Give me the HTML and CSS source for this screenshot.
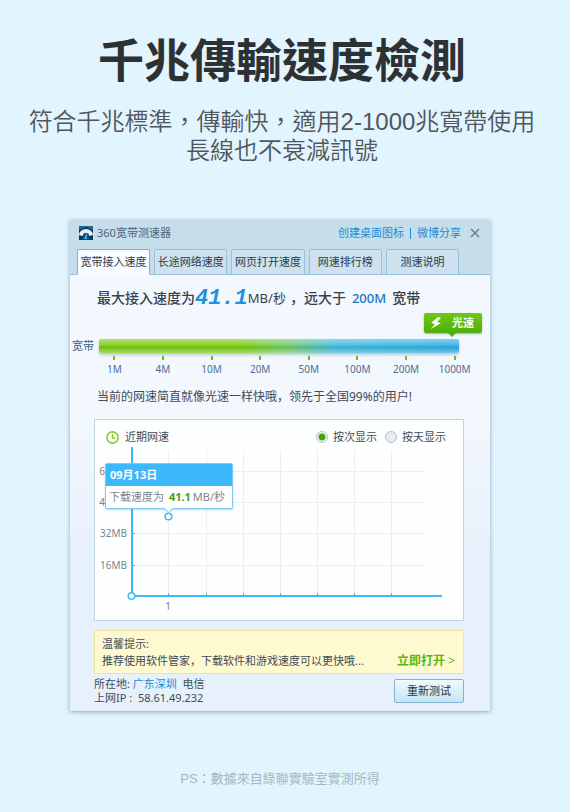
FILE: index.html
```html
<!DOCTYPE html>
<html lang="zh-Hant">
<head>
  <meta charset="UTF-8" />
  <meta name="viewport" content="width=device-width, initial-scale=1.0"/>
  <title>千兆傳輸速度檢測</title>
  <link rel="stylesheet" href="styles.css">
</head>
<body>
  <header class="intro">
    <h1>千兆傳輸速度檢測</h1>
    <p>符合千兆標準，傳輸快，適用2-1000兆寬帶使用<br>長線也不衰減訊號</p>
  </header>

  <main class="window" lang="zh-Hans">
    <div class="titlebar">
      <svg class="app-icon" width="14" height="14" viewBox="0 0 14 14">
        <rect width="14" height="14" fill="#0d3556"/>
        <path d="M0 0h14v4L7 1 0 4z" fill="#1d6796"/>
        <path d="M0 9a7 6 0 0 1 14 0l-4 1a3 3 0 0 0-6 0z" fill="#e9f2f7"/>
        <path d="M3 14l1-4a3 3 0 0 1 6 0l1 4z" fill="#0a4c80"/>
        <path d="M5 13l3-7v7z" fill="#35b4ef"/>
      </svg>
      <span class="app-name">360宽带测速器</span>
      <a href="#">创建桌面图标</a>
      <span class="divider"></span>
      <a href="#">微博分享</a>
      <button type="button" class="close" aria-label="关闭">
        <svg width="10" height="10" viewBox="0 0 10 10">
          <path d="M1 1l8 8M9 1l-8 8" stroke="#71818d" stroke-width="1.6"/>
        </svg>
      </button>
    </div>

    <nav class="tabs">
      <button type="button" class="active">宽带接入速度</button>
      <button type="button">长途网络速度</button>
      <button type="button">网页打开速度</button>
      <button type="button">网速排行榜</button>
      <button type="button">测速说明</button>
    </nav>

    <div class="content">
      <div class="result">
        <span>最大接入速度为</span>
        <span class="digits">41.1</span>
        <span class="unit">MB/秒</span>
        <span class="than">，远大于</span>
        <span class="plan">200M</span>
        <span>宽带</span>
      </div>

      <div class="badge">
        <svg width="12" height="12" viewBox="0 0 12 12">
          <path d="M8 0L1 6l4 1-4 5 10-6-4-1 4-4z" fill="#fff"/>
        </svg>
        光速
      </div>
      <div class="meter">
        <span>宽带</span>
        <div class="bar"></div>
      </div>
      <div class="scale">
        <span>1M</span>
        <span>4M</span>
        <span>10M</span>
        <span>20M</span>
        <span>50M</span>
        <span>100M</span>
        <span>200M</span>
        <span>1000M</span>
      </div>
      <p class="message">当前的网速简直就像光速一样快哦，领先于全国99%的用户!</p>

      <section class="panel">
        <div class="panel-head">
          <svg width="13" height="13" viewBox="0 0 13 13" fill="none" stroke="#8bc92f">
            <circle cx="6.500" cy="6.500" r="5.600" stroke-width="1.600"/>
            <path d="M6.500 3v4H9.500" stroke-width="1.400"/>
          </svg>
          <h2>近期网速</h2>
          <input type="radio" name="view" id="by-time" checked>
          <label for="by-time">按次显示</label>
          <input type="radio" name="view" id="by-day">
          <label for="by-day">按天显示</label>
        </div>
        <div class="chart">
          <svg width="368" height="173" viewBox="0 0 368 173">
            <g class="grid">
              <path d="M37 24.500H329M37 55.500H329M37 86.500H329M37 118.500H329"/>
              <path d="M73.500 3V149M111.500 3V149M148.500 3V149M185.500 3V149M222.500 3V149M259.500 3V149M296.500 3V149"/>
            </g>
            <g class="axis-labels">
              <text x="10" y="28" text-anchor="end">6</text>
              <text x="10" y="59" text-anchor="end">4</text>
              <text x="32" y="90" text-anchor="end">32MB</text>
              <text x="32" y="122" text-anchor="end">16MB</text>
              <text x="73" y="163" text-anchor="middle">1</text>
            </g>
            <path class="ticks" d="M37 86.500h3M37 118.500h3M73.500 146v3M111.500 146v3M148.500 146v3M185.500 146v3M222.500 146v3M259.500 146v3M296.500 146v3"/>
            <path class="axis" d="M37 0V149H347"/>
            <circle class="dot" cx="36.500" cy="149" r="3.300"/>
            <circle class="dot" cx="73.500" cy="69.500" r="3.300"/>
          </svg>
          <div class="tooltip">
            <div class="tooltip-date">09月13日</div>
            <div class="tooltip-value">下载速度为 <b>41.1</b><span>MB/秒</span></div>
          </div>
        </div>
      </section>

      <section class="tip">
        <div>
          <div>温馨提示:</div>
          <div>推荐使用软件管家，下载软件和游戏速度可以更快哦...</div>
        </div>
        <a href="#">立即打开 <span>&gt;</span></a>
      </section>

      <div class="bottom">
        <div class="address">
          <div>所在地: <a href="#">广东深圳</a>&nbsp; 电信</div>
          <div>上网IP : &nbsp;58.61.49.232</div>
        </div>
        <button type="button" class="retest">重新测试</button>
      </div>
    </div>
  </main>

  <footer>PS：數據來自綠聯實驗室實測所得</footer>
</body>
</html>
```
FILE: styles.css
```css
:root {
  --body-bg: #e2f4fd;
  --text-color: #414b57;
  --link-color: #168ed8;
  --axis-color: #3db8fb;
}
* {
  margin: 0;
  padding: 0;
  box-sizing: border-box;
}
body {
  font-family: 'Liberation Sans', 'Noto Sans CJK TC', sans-serif;
  background: var(--body-bg);
  padding: 31px 10px 22px 0;
}
a {
  color: var(--link-color);
  text-decoration: none;
}
button {
  font: inherit;
  cursor: pointer;
}
.intro {
  margin-right: -4px;
  text-align: center;
  color: #2d3134;
}
.intro h1 {
  font-size: 46px;
  line-height: 60px;
  font-weight: 700;
}
.intro p {
  margin-top: 16px;
  font-size: 24px;
  line-height: 29px;
  font-weight: 350;
  color: #50575c;
}

/* speed test window */
.window {
  max-width: 420px;
  margin: 55px auto 0;
  background: linear-gradient(#f3f7fe 40%, #e7f1fb 70%);
  font-family: 'Noto Sans', 'Noto Sans CJK SC', sans-serif;
  font-size: 11px;
  line-height: 14px;
  color: var(--text-color);
  box-shadow: 0 1px 4px rgba(60,90,110,0.5);
}
.titlebar {
  display: flex;
  align-items: center;
  height: 26px;
  padding: 0 10px 0 9px;
  background: #c6deeb;
}
.app-name {
  margin: 0 auto 0 4px;
  color: #4c6478;
}
.divider {
  width: 1px;
  height: 11px;
  margin: 0 6px;
  background: var(--link-color);
}
.close {
  display: flex;
  margin-left: 9px;
  border: none;
  background: none;
}
.tabs {
  display: flex;
  gap: 4px;
  padding: 3px 31px 0 7px;
  background: #c6deeb;
  box-shadow: inset 0 -1px #9abdd4;
}
.tabs button {
  flex: 1;
  height: 26px;
  border: 1px solid #9cc0d8;
  border-radius: 2px 2px 0 0;
  background: #cde1ee;
  color: #2e3b48;
  white-space: nowrap;
}
.tabs .active {
  background: #f8fbff;
  border-color: #7fb2d6;
  border-bottom-color: #f8fbff;
}
.content {
  padding: 10px 26px 6px 24px;
}
.result {
  display: flex;
  align-items: center;
  padding-left: 3px;
  height: 26px;
  font-size: 14px;
  font-weight: 500;
  white-space: nowrap;
  color: #39424d;
}
.digits {
  font: italic bold 22px 'Liberation Mono', monospace;
  color: #1b93e0;
}
.unit {
  font-size: 13px;
  font-weight: 400;
}
.than {
  margin-left: 4px;
}
.plan {
  margin: 0 6px;
  font-size: 13px;
  color: #1976c8;
}

/* green to blue meter */
.badge {
  position: relative;
  display: flex;
  align-items: center;
  justify-content: space-between;
  width: 58px;
  height: 20px;
  margin: 2px -18px 6px auto;
  padding: 0 8px 0 6px;
  border-radius: 2px;
  background: linear-gradient(#6fc80f, #4fae10);
  box-shadow: 0 1px 2px rgba(0,0,0,0.3);
  color: #fff;
  font-weight: 700;
}
.badge::after {
  content: '';
  position: absolute;
  left: 24px;
  top: 20px;
  border: 4px solid transparent;
  border-top-color: #4fae10;
  border-bottom: 0;
}
.meter {
  display: flex;
  gap: 5px;
  margin: 0 5px 0 -22px;
  color: #3e6288;
}
.bar {
  flex: 1;
  height: 14px;
  border-radius: 2px;
  background:
    linear-gradient(rgba(255,255,255,0.4), rgba(255,255,255,0.1) 45%, rgba(0,60,0,0.12) 55%, rgba(255,255,255,0.3)),
    linear-gradient(90deg, #7dcd0e 40%, #74cb69 52%, #3fbce2 66%, #2eaeea);
  box-shadow: 0 2px 3px rgba(90,110,140,0.35);
}
.scale {
  display: grid;
  grid-template-columns: repeat(8, 1fr);
  margin: 3px -15px 0 -4px;
  font-size: 10px;
  text-align: center;
  color: #4d6f92;
}
.scale span::before {
  content: '';
  display: block;
  width: 2px;
  height: 4px;
  margin: 0 auto 2px;
  background: #6dbb22;
}
.message {
  margin: 13px -26px 14px 3px;
  font-size: 12px;
  line-height: 16px;
}

/* history chart */
.panel {
  border: 1px solid #bed5e3;
  background: #fdfefe;
}
.panel-head {
  display: flex;
  align-items: center;
  height: 27px;
  padding: 7px 17px 0 11px;
}
.panel-head h2 {
  margin: 0 auto 0 6px;
  font-size: 11px;
  font-weight: 400;
}
.panel-head input {
  appearance: none;
  width: 12px;
  height: 12px;
  margin: 0 5px 0 8px;
  border: 1px solid #b4bfca;
  border-radius: 50%;
  background: #e9edf0;
}
.panel-head input:checked {
  background: radial-gradient(circle, #43a30b 3px, #f1f5f7 4px);
}
.chart {
  position: relative;
}
.chart svg {
  display: block;
}
.grid {
  stroke: #ebeef4;
}
.axis-labels {
  font-size: 10px;
  fill: #7b8490;
}
.axis {
  fill: none;
  stroke: var(--axis-color);
  stroke-width: 2;
}
.ticks {
  stroke: var(--axis-color);
}
.dot {
  fill: #fff;
  stroke: var(--axis-color);
  stroke-width: 1.5;
}
.tooltip {
  position: absolute;
  left: 10px;
  top: 16px;
  width: 128px;
  border: 1px solid #7ccbf5;
  border-radius: 2px;
  background: #fff;
  white-space: nowrap;
  box-shadow: 0 1px 2px rgba(60,120,160,0.3);
}
.tooltip::after {
  content: '';
  position: absolute;
  left: 59px;
  top: 41px;
  width: 6px;
  height: 6px;
  border: solid #7ccbf5;
  border-width: 0 1px 1px 0;
  background: #fff;
  transform: rotate(45deg);
}
.tooltip-date {
  padding-left: 4px;
  line-height: 22px;
  background: var(--axis-color);
  color: #fff;
  font-weight: 700;
}
.tooltip-value {
  padding-left: 3px;
  line-height: 22px;
  color: #7c838c;
}
.tooltip-value b {
  margin: 0 2px;
  color: #45a010;
}

.tip {
  display: flex;
  justify-content: space-between;
  align-items: flex-end;
  margin-top: 9px;
  padding: 4px 8px 4px 7px;
  border: 1px solid #ece3a4;
  background: #fff9cf;
  line-height: 17px;
  white-space: nowrap;
}
.tip a {
  font-size: 12px;
  color: #56b80b;
  font-weight: 700;
}
.tip a span {
  font-weight: 400;
}
.bottom {
  display: flex;
  justify-content: space-between;
  align-items: center;
  padding-top: 3px;
}
.retest {
  width: 70px;
  height: 24px;
  border: 1px solid #7fb3d3;
  border-radius: 2px;
  background: linear-gradient(#f2fafe, #c3e5f5);
  color: #26343f;
}

footer {
  margin-top: 58px;
  text-align: center;
  font-size: 13px;
  line-height: 20px;
  color: #a5b8c1;
}
```
